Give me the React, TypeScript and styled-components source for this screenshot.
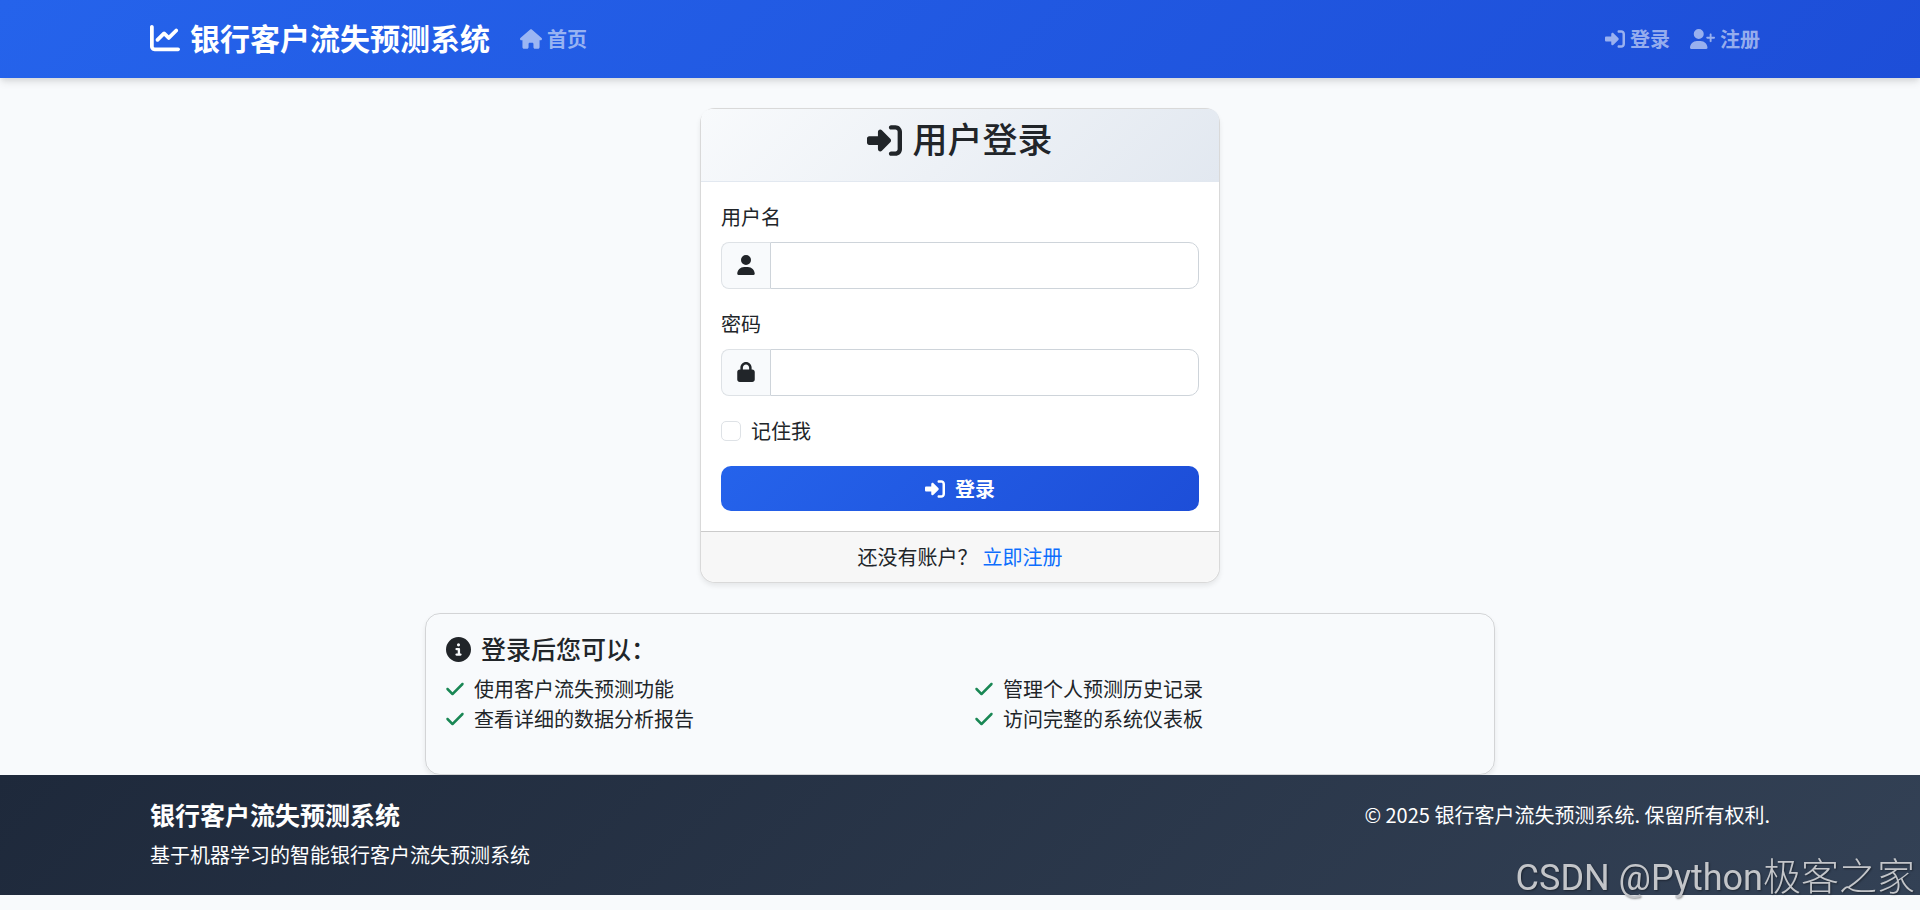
import React from "react";
import styled, { createGlobalStyle } from "styled-components";
import {
  FaChartLine,
  FaCheck,
  FaCircleInfo,
  FaHouse,
  FaLock,
  FaRightToBracket,
  FaUser,
  FaUserPlus,
} from "react-icons/fa6";

const GlobalStyle = createGlobalStyle`
  *, *::before, *::after { box-sizing: border-box; }
  body {
    margin: 0;
    background: #f8fafc;
    color: #212529;
    font-family: "Noto Sans CJK SC", sans-serif;
    font-size: 20px;
    line-height: 30px;
  }
  h1, h2, h3, p, ul { margin: 0; padding: 0; font-weight: inherit; }
  a { text-decoration: none; }
`;

const headingFont = `"Noto Sans", "Noto Sans CJK SC", sans-serif`;

const Icon = styled.span<{ $width: number; $height?: number; $color?: string }>`
  display: flex;
  flex: none;
  color: ${(p) => p.$color ?? "inherit"};

  svg {
    width: ${(p) => p.$width}px;
    height: ${(p) => p.$height ?? 20}px;
  }
`;

const Container = styled.div`
  display: flex;
  width: 100%;
  max-width: 1650px;
  margin: 0 auto;
  padding: 0 15px;
`;

const Navbar = styled.header`
  position: relative;
  padding: 10px 0;
  background: linear-gradient(135deg, #2563eb 0%, #1d4ed8 100%);
  box-shadow: 0 5px 8px -1px rgba(0, 0, 0, 0.1), 0 3px 5px -1px rgba(0, 0, 0, 0.06);
`;

const NavContent = styled(Container)`
  align-items: center;
  min-height: 58px;
`;

const Brand = styled.a`
  display: flex;
  align-items: center;
  gap: 10px;
  margin-right: 20px;
  padding-bottom: 2px;
  color: #fff;
  font-family: ${headingFont};
  font-size: 30px;
  font-weight: 700;
  line-height: 45px;
`;

const Nav = styled.nav<{ $end?: boolean }>`
  display: flex;
  margin-left: ${(p) => (p.$end ? "auto" : "0")};
`;

const NavLink = styled.a`
  display: flex;
  align-items: center;
  gap: 5px;
  padding: 10px;
  color: rgba(255, 255, 255, 0.55);
  font-weight: 700;
`;

const Main = styled.main`
  display: flex;
  flex-direction: column;
  align-items: center;
  gap: 30px;
  padding-top: 30px;
`;

const Card = styled.section`
  border: 1px solid rgba(0, 0, 0, 0.15);
  border-radius: 15px;
  box-shadow: 0 3px 5px rgba(0, 0, 0, 0.075);
`;

const LoginCard = styled(Card)`
  width: 100%;
  max-width: 520px;
  background: #fff;
`;

const CardHeader = styled.header`
  padding: 10px 20px 20px;
  border-bottom: 1px solid #e2e8f0;
  border-radius: 10px 10px 0 0;
  background: linear-gradient(135deg, #f8fafc 0%, #e2e8f0 100%);
`;

const CardTitle = styled.h1`
  display: flex;
  align-items: center;
  justify-content: center;
  gap: 10px;
  font-family: ${headingFont};
  font-size: 35px;
  font-weight: 500;
  line-height: 42px;
`;

const LoginForm = styled.form`
  display: flex;
  flex-direction: column;
  gap: 20px;
  padding: 20px;
`;

const Field = styled.div`
  display: flex;
  flex-direction: column;
  gap: 10px;
`;

const InputGroup = styled.div`
  display: flex;
  height: 47px;
`;

const Addon = styled.span`
  display: flex;
  align-items: center;
  padding: 0 15px 2px;
  border: 1px solid #dee2e6;
  border-right: 0;
  border-radius: 8px 0 0 8px;
  background: #f8fafc;
`;

const TextInput = styled.input`
  flex: 1;
  min-width: 0;
  padding: 0 15px;
  border: 1px solid #ced4da;
  border-radius: 0 10px 10px 0;
  background: #fff;
  color: inherit;
  font: inherit;
  outline: none;
`;

const Remember = styled.label`
  display: flex;
  align-items: center;
  gap: 10px;
`;

const Checkbox = styled.input`
  appearance: none;
  width: 20px;
  height: 20px;
  margin: 0;
  border: 1px solid #dee2e6;
  border-radius: 5px;
  background: #fff;

  &:checked {
    background: #2563eb;
  }
`;

const SubmitButton = styled.button`
  display: flex;
  align-items: center;
  justify-content: center;
  gap: 10px;
  height: 45px;
  border: 0;
  border-radius: 10px;
  background: linear-gradient(135deg, #2563eb 0%, #1d4ed8 100%);
  color: #fff;
  font: inherit;
  font-weight: 600;
  cursor: pointer;
`;

const CardFooter = styled.footer`
  display: flex;
  justify-content: center;
  gap: 5px;
  padding: 10px 20px;
  border-top: 1px solid rgba(0, 0, 0, 0.175);
  border-radius: 0 0 15px 15px;
  background: #f7f7f7;
`;

const RegisterLink = styled.a`
  color: #0d6efd;
`;

const InfoCard = styled(Card)`
  width: 100%;
  max-width: 1070px;
  padding: 20px 20px 40px;
`;

const InfoTitle = styled.h2`
  display: flex;
  align-items: center;
  gap: 10px;
  margin-bottom: 10px;
  font-family: ${headingFont};
  font-size: 25px;
  font-weight: 500;
`;

const FeatureList = styled.ul`
  display: grid;
  grid-template-columns: 1fr 1fr;
  column-gap: 30px;
  list-style: none;
`;

const Feature = styled.li`
  display: flex;
  align-items: center;
  gap: 10px;
`;

const PageFooter = styled.footer`
  position: relative;
  padding: 25px 0;
  background: linear-gradient(135deg, #1e293b 0%, #334155 100%);
  color: #fff;
`;

const FooterContent = styled(Container)`
  justify-content: space-between;
`;

const FooterTitle = styled.h2`
  margin-bottom: 10px;
  font-family: ${headingFont};
  font-size: 25px;
  font-weight: 700;
`;

const Watermark = styled.div`
  position: fixed;
  right: 5px;
  bottom: 10px;
  color: #c3c5c9;
  font-size: 38px;
  font-weight: 300;
  line-height: 44px;
  text-shadow: 1px 1px 2px rgba(0, 0, 0, 0.4);
  pointer-events: none;
`;

const WatermarkLatin = styled.span`
  font-family: Roboto, sans-serif;
  font-size: 36px;
  font-weight: 400;
`;

const FEATURES = [
  "使用客户流失预测功能",
  "管理个人预测历史记录",
  "查看详细的数据分析报告",
  "访问完整的系统仪表板",
];

export default function App() {
  return (
    <>
      <GlobalStyle />
      <Navbar>
        <NavContent>
          <Brand href="#">
            <Icon $width={30} $height={30}>
              <FaChartLine />
            </Icon>
            银行客户流失预测系统
          </Brand>
          <Nav>
            <NavLink href="#">
              <Icon $width={22}>
                <FaHouse />
              </Icon>
              首页
            </NavLink>
          </Nav>
          <Nav $end>
            <NavLink href="#">
              <Icon $width={20}>
                <FaRightToBracket />
              </Icon>
              登录
            </NavLink>
            <NavLink href="#">
              <Icon $width={25}>
                <FaUserPlus />
              </Icon>
              注册
            </NavLink>
          </Nav>
        </NavContent>
      </Navbar>

      <Main>
        <LoginCard>
          <CardHeader>
            <CardTitle>
              <Icon $width={35} $height={35}>
                <FaRightToBracket />
              </Icon>
              用户登录
            </CardTitle>
          </CardHeader>
          <LoginForm onSubmit={(e) => e.preventDefault()}>
            <Field>
              <label htmlFor="username">用户名</label>
              <InputGroup>
                <Addon>
                  <Icon $width={18}>
                    <FaUser />
                  </Icon>
                </Addon>
                <TextInput id="username" type="text" />
              </InputGroup>
            </Field>
            <Field>
              <label htmlFor="password">密码</label>
              <InputGroup>
                <Addon>
                  <Icon $width={18}>
                    <FaLock />
                  </Icon>
                </Addon>
                <TextInput id="password" type="password" />
              </InputGroup>
            </Field>
            <Remember>
              <Checkbox type="checkbox" />
              记住我
            </Remember>
            <SubmitButton type="submit">
              <Icon $width={20}>
                <FaRightToBracket />
              </Icon>
              登录
            </SubmitButton>
          </LoginForm>
          <CardFooter>
            <span>还没有账户？</span>
            <RegisterLink href="#">立即注册</RegisterLink>
          </CardFooter>
        </LoginCard>

        <InfoCard>
          <InfoTitle>
            <Icon $width={25} $height={25}>
              <FaCircleInfo />
            </Icon>
            登录后您可以：
          </InfoTitle>
          <FeatureList>
            {FEATURES.map((text) => (
              <Feature key={text}>
                <Icon $width={18} $color="#198754">
                  <FaCheck />
                </Icon>
                {text}
              </Feature>
            ))}
          </FeatureList>
        </InfoCard>
      </Main>

      <PageFooter>
        <FooterContent>
          <div>
            <FooterTitle>银行客户流失预测系统</FooterTitle>
            <p>基于机器学习的智能银行客户流失预测系统</p>
          </div>
          <p>© 2025 银行客户流失预测系统. 保留所有权利.</p>
        </FooterContent>
      </PageFooter>
      <Watermark>
        <WatermarkLatin>CSDN @Python</WatermarkLatin>极客之家
      </Watermark>
    </>
  );
}
